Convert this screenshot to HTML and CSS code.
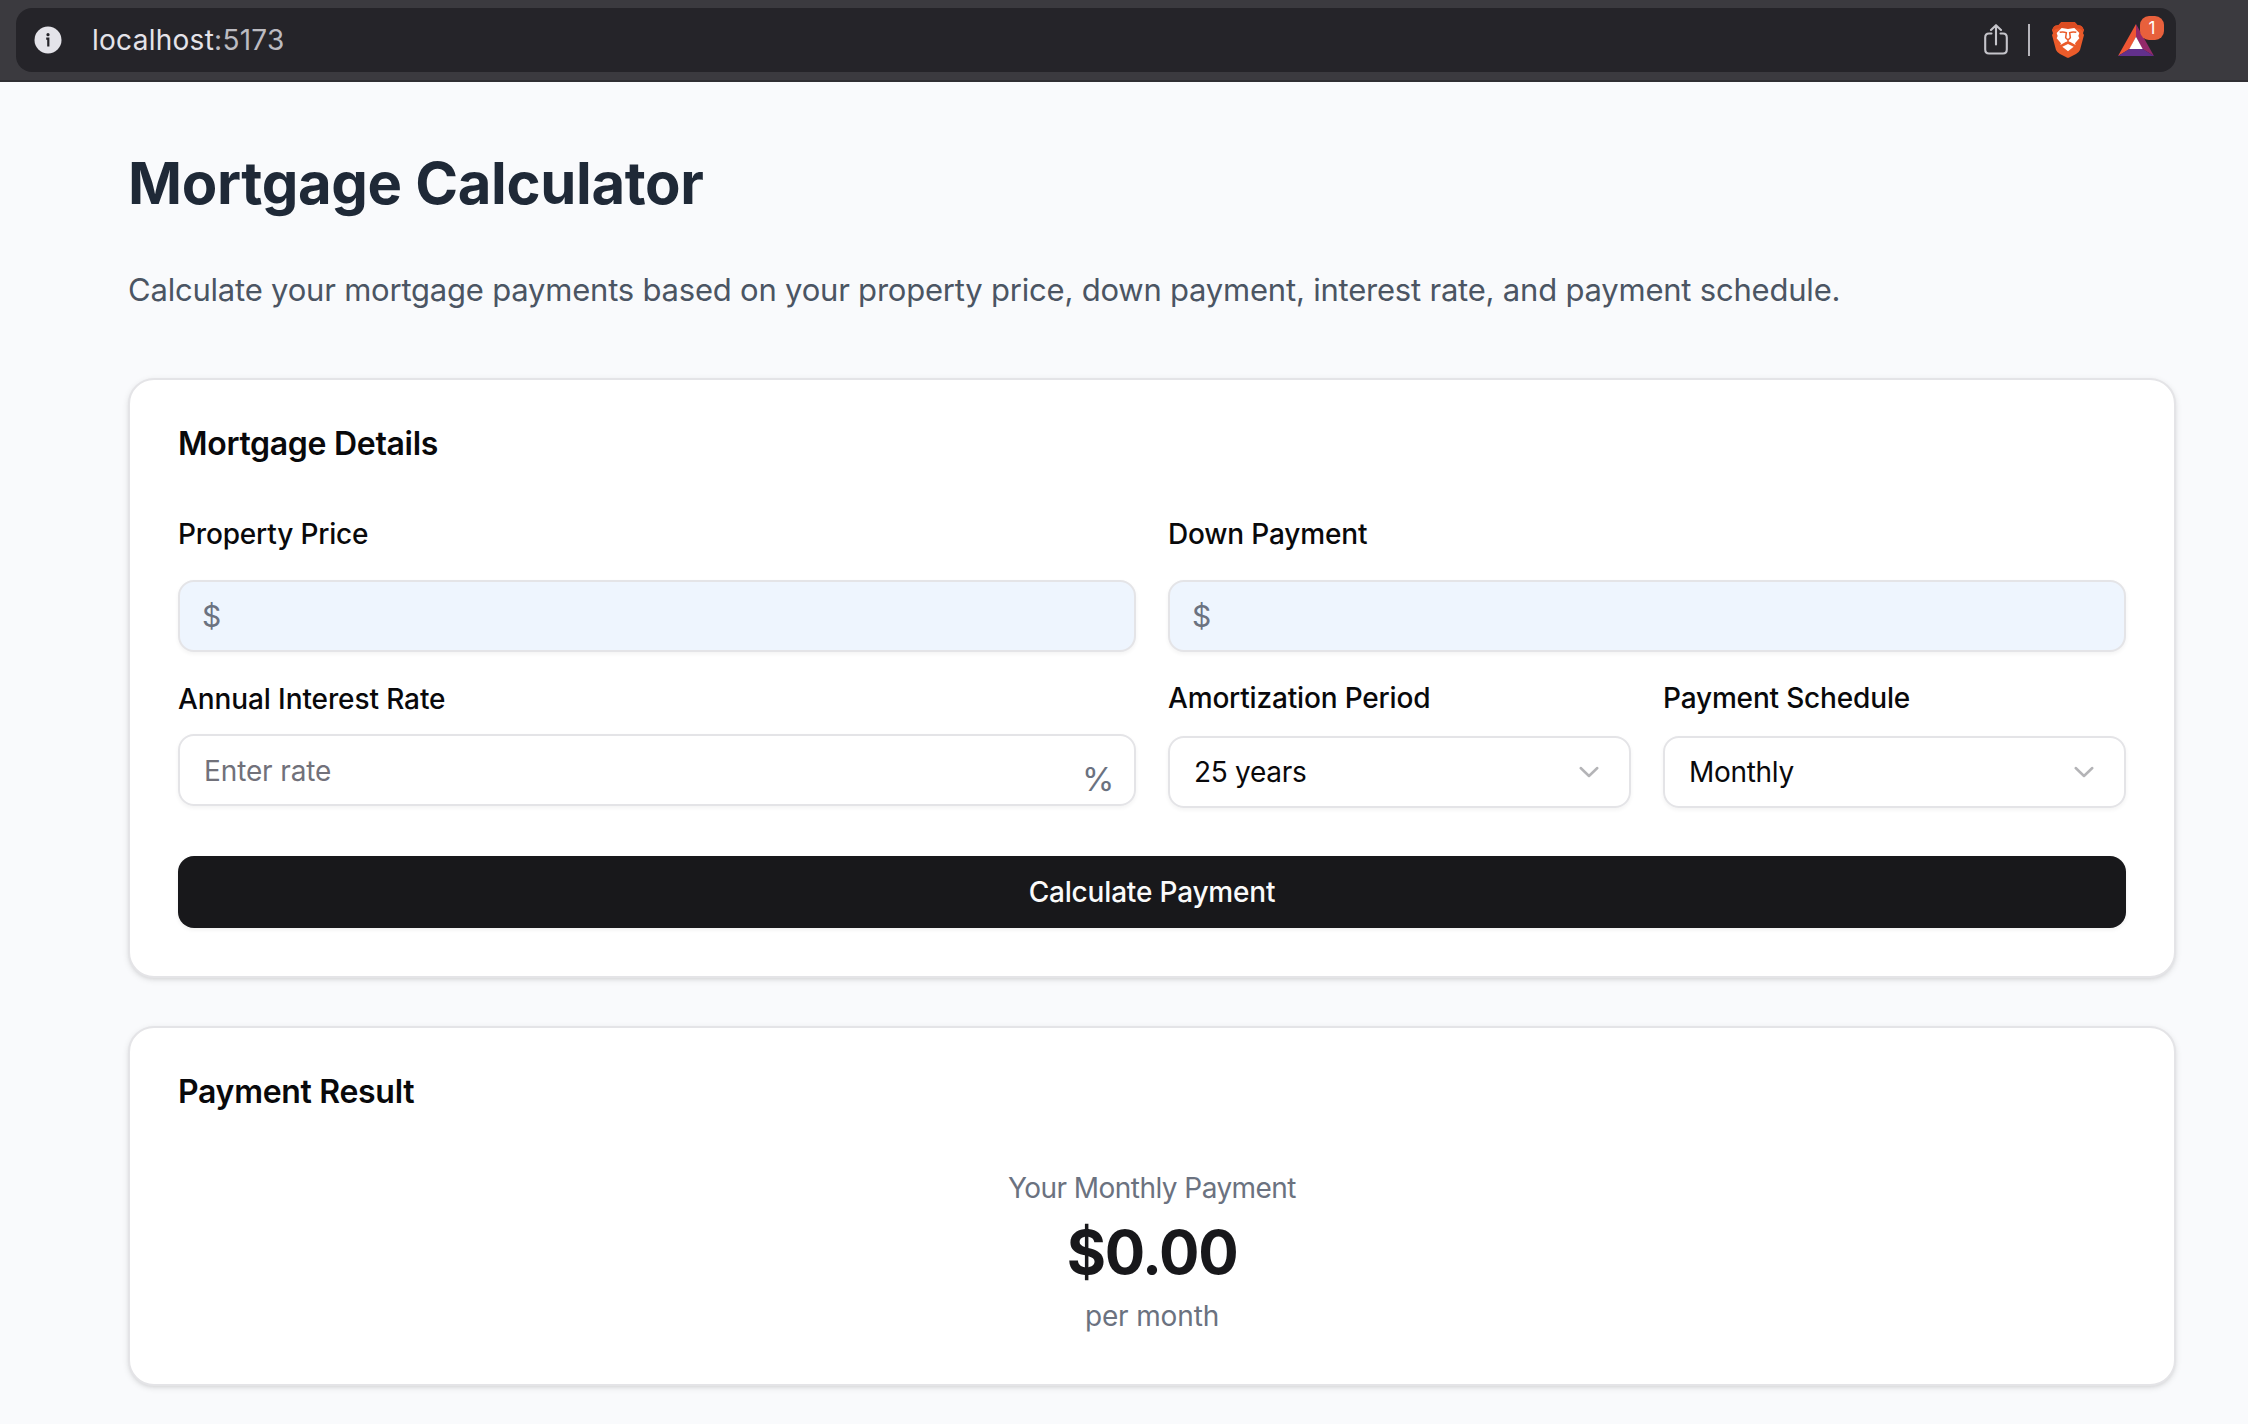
FILE: index.html
```
<!DOCTYPE html>
<html lang="en">
<head>
<meta charset="utf-8">
<title>Mortgage Calculator</title>
<link rel="stylesheet" href="styles.css">
</head>
<body>
<header class="browser-bar">
  <div class="omnibox">
    <svg class="info-icon" viewBox="0 0 28 28"><circle cx="14" cy="14" r="13.5" fill="#e4e3e9"/><circle cx="14" cy="8.7" r="1.6" fill="#252429"/><path d="M12.200 12.700H14.300V20.400" fill="none" stroke="#252429" stroke-width="2.2"/></svg>
    <span class="url">localhost<span class="port">:5173</span></span>
    <svg class="share-icon" viewBox="0 0 24 32" fill="none" stroke="#c5c4ca" stroke-width="2.1" stroke-linecap="round" stroke-linejoin="round"><path d="M7.500 9.500H5Q1.200 9.500 1.200 13.500V25.500Q1.200 29.500 5 29.500H19Q22.800 29.500 22.800 25.500V13.500Q22.800 9.500 19 9.500H16.500M12 20.500V1.500M7 6L12 1.200 17 6"/></svg>
    <span class="divider"></span>
    <svg class="shield-icon" viewBox="0 0 96 108">
      <path d="M28 0H68L77 10Q87 9 91 15L96 24 93 34 96 39 84 84Q81 91 72 96L53 106Q48 109 43 106L24 96Q15 91 12 84L0 39 3 34 0 24 5 15Q9 9 19 10Z" fill="#eb5b2a"/>
      <path d="M28 0H68L77 10Q87 9 91 15L96 24 93 28Q84 17 70 19L48 21 26 19Q12 17 3 28L0 24 5 15Q9 9 19 10Z" fill="#dc4c22"/>
      <path d="M29 18L48 21 67 18 82 33 79 42 82 49 69 64 71 69 55 60 48 58 41 60 25 69 27 64 14 49 17 42 14 33Z" fill="#fff"/>
      <path d="M23 31Q34 28 43 32L41 47 48 54 55 47 53 32Q62 28 73 31" fill="none" stroke="#eb5b2a" stroke-width="4.500"/>
      <path d="M48 55V62" stroke="#eb5b2a" stroke-width="4"/>
      <path d="M31 74L48 66 65 74 48 88Z" fill="#fff"/>
    </svg>
    <span class="rewards">
      <svg class="triangle-icon" viewBox="0 0 108 96"><path d="M54 0L0 96 36 74 54 38Z" fill="#ee5634"/><path d="M54 0L108 96 72 74 54 38Z" fill="#93296a"/><path d="M0 96H108L73 74H35Z" fill="#62308c"/><path d="M54 38L74 75H34Z" fill="#fff"/></svg>
      <span class="badge">1</span>
    </span>
  </div>
</header>
<main class="page">
  <h1 class="title">Mortgage Calculator</h1>
  <p class="subtitle">Calculate your mortgage payments based on your property price, down payment, interest rate, and payment schedule.</p>
  <section class="card details">
    <h2 class="card-title">Mortgage Details</h2>
    <div class="row prices">
      <div class="field"><label class="label">Property Price</label><div class="control filled"><span class="dollar">$</span></div></div>
      <div class="field"><label class="label">Down Payment</label><div class="control filled"><span class="dollar">$</span></div></div>
    </div>
    <div class="row terms">
      <div class="field rate"><label class="label">Annual Interest Rate</label><div class="control"><span class="placeholder">Enter rate</span><span class="percent">%</span></div></div>
      <div class="row selects">
        <div class="field"><label class="label">Amortization Period</label><div class="control select"><span>25 years</span><svg class="chevron" viewBox="0 0 32 32"><path d="M7.700 12L16 20 24.300 12"/></svg></div></div>
        <div class="field"><label class="label">Payment Schedule</label><div class="control select"><span>Monthly</span><svg class="chevron" viewBox="0 0 32 32"><path d="M7.700 12L16 20 24.300 12"/></svg></div></div>
      </div>
    </div>
    <button class="submit">Calculate Payment</button>
  </section>
  <section class="card result">
    <h2 class="card-title">Payment Result</h2>
    <div class="summary">
      <p class="note heading">Your Monthly Payment</p>
      <p class="amount">$0.00</p>
      <p class="note">per month</p>
    </div>
  </section>
</main>
</body>
</html>
```
FILE: styles.css
```
* { box-sizing: border-box; }

body {
  margin: 0;
  background: #f9fafc;
  color: #09090b;
  font: 28px/40px Inter, "Liberation Sans", sans-serif;
}

h1, h2, p { margin: 0; }
svg { display: block; flex: none; }

/* Browser bar */
.browser-bar {
  height: 82px;
  padding: 8px 72px 0 16px;
  background: #3b3a3f;
  border-bottom: 2px solid #302f33;
}
.omnibox {
  display: flex;
  align-items: center;
  height: 64px;
  padding: 0 22px 0 18px;
  border-radius: 16px;
  background: #252429;
}
.info-icon { width: 28px; height: 28px; }
.url {
  flex: 1;
  margin-left: 30px;
  color: #e4e3e9;
  letter-spacing: 0.27px;
}
.port { color: #bcbbc1; }
.share-icon { width: 24px; height: 32px; }
.divider {
  width: 2px;
  height: 32px;
  margin: 0 22px 0 20px;
  background: #b6b5bb;
}
.shield-icon { width: 32px; height: 36px; }
.rewards {
  position: relative;
  margin-left: 34px;
}
.triangle-icon { width: 36px; height: 32px; }
.badge {
  position: absolute;
  top: -8px;
  left: 22px;
  width: 24px;
  height: 24px;
  border-radius: 9px;
  background: #e8603c;
  color: #fff;
  font-size: 17px;
  line-height: 24px;
  text-align: center;
}

/* Page */
.page { padding: 65px 72px 38px 128px; }
.title {
  color: #1f2937;
  font-size: 58px;
  font-weight: 700;
  line-height: 72px;
  letter-spacing: -0.342px;
}
.subtitle {
  margin: 47px 0 64px;
  color: #4b5563;
  font-size: 31px;
  line-height: 48px;
  letter-spacing: -0.209px;
}

.card {
  padding: 48px;
  border: 2px solid #e4e4e7;
  border-radius: 26px;
  background: #fff;
  box-shadow: 0 2px 6px rgba(0, 0, 0, 0.1), 0 2px 4px -2px rgba(0, 0, 0, 0.1);
}
.card + .card { margin-top: 48px; }
.card-title {
  font-size: 32px;
  font-weight: 600;
  line-height: 32px;
  letter-spacing: -0.3px;
}

/* Form */
.row {
  display: grid;
  grid-template-columns: 1fr 1fr;
  gap: 32px;
}
.prices { margin-top: 60px; }
.terms { margin-top: 32px; }
.label {
  display: block;
  margin-bottom: 24px;
  font-weight: 500;
  line-height: 28px;
  letter-spacing: -0.17px;
}
.prices .label { margin-bottom: 32px; }
.rate .label {
  margin: 1px 0 21px;
  letter-spacing: -0.1px;
}
.control {
  display: flex;
  align-items: center;
  justify-content: space-between;
  height: 72px;
  padding: 0 24px;
  border: 2px solid #e4e4e7;
  border-radius: 16px;
  box-shadow: 0 2px 4px rgba(0, 0, 0, 0.05);
  letter-spacing: -0.3px;
}
.filled { background: #eef5fe; }
.dollar {
  margin-left: -2px;
  color: #6b7280;
  font-size: 30px;
}
.placeholder {
  padding-top: 1px;
  color: #71717a;
  letter-spacing: -0.12px;
}
.percent {
  padding-top: 17px;
  margin-right: -4px;
  color: #6b7280;
  font-size: 33px;
}
.chevron {
  width: 32px;
  height: 32px;
  fill: none;
  stroke: #b4b4b7;
  stroke-width: 2.500;
  stroke-linecap: round;
  stroke-linejoin: round;
}
.submit {
  display: block;
  width: 100%;
  height: 72px;
  margin-top: 48px;
  border: 0;
  border-radius: 16px;
  background: #18181b;
  color: #fafafa;
  font: 500 28px/40px Inter, "Liberation Sans", sans-serif;
  letter-spacing: -0.18px;
  box-shadow: 0 2px 4px rgba(0, 0, 0, 0.06);
}

/* Result */
.summary {
  display: flex;
  flex-direction: column;
  align-items: center;
  gap: 8px;
  margin-top: 60px;
}
.note {
  color: #6b7280;
  letter-spacing: -0.15px;
}
.note.heading { letter-spacing: -0.55px; }
.amount {
  color: #18181b;
  font-size: 60px;
  font-weight: 700;
  line-height: 72px;
  letter-spacing: -1.3px;
}
```
